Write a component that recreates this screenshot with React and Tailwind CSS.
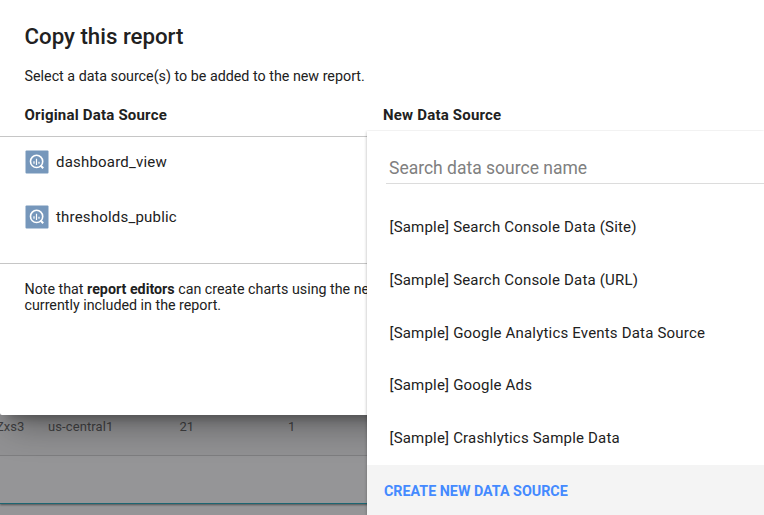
const sources = ["dashboard_view", "thresholds_public"];

const options = [
  "[Sample] Search Console Data (Site)",
  "[Sample] Search Console Data (URL)",
  "[Sample] Google Analytics Events Data Source",
  "[Sample] Google Ads",
  "[Sample] Crashlytics Sample Data",
];

function SourceIcon() {
  return (
    <svg width="24" height="24" viewBox="0 0 24 24" className="shrink-0" fill="none">
      <rect x="0.5" y="0.5" width="23" height="23" rx="1" fill="#7697bb" />
      <circle cx="11.6" cy="11.4" r="6.1" stroke="#fff" strokeWidth="1.6" />
      <path d="M15.6 15.6L18.2 18.3" stroke="#fff" strokeWidth="2.1" />
      <path d="M9 11.2V13.7M11.5 8.7V14.9M14 11.7V13.7" stroke="#fff" strokeWidth="1.2" />
    </svg>
  );
}

function SourceMenu() {
  return (
    <div className="absolute left-[367px] top-[131px] z-20 flex h-[384px] w-[397px] flex-col bg-white shadow-[0_1px_3px_rgba(0,0,0,0.3)] [clip-path:inset(-1px_0_0_-4px)]">
      <div className="ml-[19px] flex h-[53px] shrink-0 items-end border-b border-[#dcdcdc] pb-[4px] pl-[3px] text-[17.5px] leading-[21px] text-[#808080]">
        Search data source name
      </div>
      <ul className="flex flex-1 flex-col pt-[17.3px]">
        {options.map((name) => (
          <li key={name} className="flex h-[52.7px] shrink-0 items-center pl-[22.5px] text-[15px] tracking-[0.19px]">
            {name}
          </li>
        ))}
      </ul>
      <div className="flex h-[50px] shrink-0 items-center bg-[#f4f4f4] pl-[17px] pt-[3px] text-[14.3px] font-bold text-[#448aff]">
        CREATE NEW DATA SOURCE
      </div>
    </div>
  );
}

export default function App() {
  return (
    <div className="relative flex h-[515px] w-[764px] flex-col overflow-hidden bg-[#959597] font-[Roboto,sans-serif] text-[#212121]">
      <main className="z-10 h-[415px] shrink-0 rounded-bl-[2px] bg-white shadow-[9px_9px_35px_rgba(0,0,0,0.38),8px_4px_10px_rgba(0,0,0,0.22)]">
        <h1 className="pl-[24.5px] pt-[22px] text-[22.25px] font-medium leading-[28px]">Copy this report</h1>
        <p className="pl-[24.5px] pt-[16px] text-[14.3px] leading-5">Select a data source(s) to be added to the new report.</p>
        <div className="flex h-[51px] items-center border-b border-[#c6c6c6] pl-[24.5px] pt-[8px] text-[15px] font-bold tracking-[0.2px]">
          <span className="w-[358.5px]">Original Data Source</span>
          <span>New Data Source</span>
        </div>
        <div className="h-[127px] border-b border-[#c6c6c6] pl-[25px]">
          {sources.map((name) => (
            <div key={name} className="flex h-[55px] items-center gap-[7px] pb-[5px] text-[15px] tracking-[0.2px]">
              <SourceIcon />
              {name}
            </div>
          ))}
        </div>
        <p className="w-[371px] overflow-hidden whitespace-nowrap pl-[24.5px] pt-[17px] text-[14.28px] leading-4">
          Note that <b>report editors</b> can create charts using the ne
          <br />
          currently included in the report.
        </p>
      </main>
      <div className="relative flex h-[41px] shrink-0 border-b border-[#7e7e80] bg-[#919193] pt-[2px] text-[13px] leading-5 text-[#414143]">
        <span className="-ml-1 w-[52px]">Zxs3</span>
        <span className="w-[131.5px] tracking-[0.1px]">us-central1</span>
        <span className="w-[108.5px]">21</span>
        <span>1</span>
      </div>
      <div className="h-[48px] shrink-0 border-b border-[#1d6672] shadow-[0_1px_2px_rgba(0,0,0,0.45)]" />
      <SourceMenu />
    </div>
  );
}
